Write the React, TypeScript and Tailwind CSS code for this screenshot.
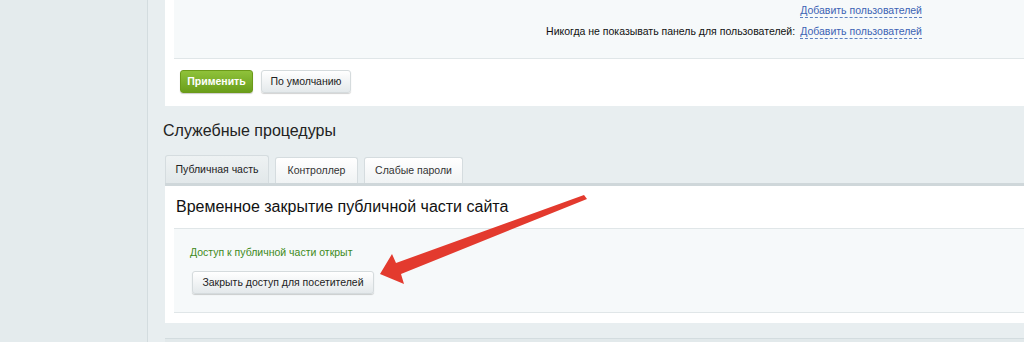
export default function App() {
  return (
    <div
      className="relative flex h-[342px] w-[1024px] overflow-hidden bg-[#e8eef0] text-[#222]"
      style={{ fontFamily: '"Liberation Sans", Arial, sans-serif' }}
    >
      {/* left column */}
      <div className="w-[148px] shrink-0 border-r border-[#d3dcdf] bg-[#e4ebed]" />

      <div className="flex flex-1 flex-col pl-[17px]">
        {/* settings panel, top cut off */}
        <div className="bg-white pl-[9px]">
          <div className="flex h-[59px] flex-col items-end justify-end border-b border-[#e0e6e8] bg-[#f6f9fa] pb-[16px] pr-[102px] text-[10.5px]">
            <div className="flex h-[22px] items-center">
              <a className="border-b border-dashed border-[#5b7fc0] leading-[13px] text-[#3c63b4]">Добавить пользователей</a>
            </div>
            <div className="flex h-[22px] items-center gap-[5px]">
              <span className="text-[#111]">Никогда не показывать панель для пользователей:</span>
              <a className="border-b border-dashed border-[#5b7fc0] leading-[13px] text-[#3c63b4]">Добавить пользователей</a>
            </div>
          </div>
          <div className="flex gap-[8px] pb-[13px] pl-[6px] pt-[11px]">
            <button className="h-[23px] w-[73px] rounded-[3px] border border-[#6c9a1a] bg-gradient-to-b from-[#8fc23a] to-[#6a9e1a] text-[10.5px] font-bold text-white shadow-[0_1px_1px_rgba(0,0,0,0.2)]">
              Применить
            </button>
            <button className="h-[23px] w-[90px] rounded-[3px] border border-[#d5dbdd] bg-gradient-to-b from-[#ffffff] to-[#e4e9eb] text-[10.5px] text-[#222] shadow-[0_1px_1px_rgba(0,0,0,0.18)]">
              По умолчанию
            </button>
          </div>
        </div>

        {/* section */}
        <h2 className="ml-[-2px] mt-[15px] h-[20px] text-[16px] leading-[20px] text-[#222]">Служебные процедуры</h2>
        <div className="mt-[14px] flex items-end gap-[6px] border-b-[3px] border-[#cfd7da]">
          <div className="flex h-[28px] w-[104px] items-center justify-center rounded-t-[3px] border border-b-0 border-[#d5dcdf] bg-gradient-to-b from-[#eef2f3] to-[#e2e8ea] text-[10.5px] text-[#222]">
            Публичная часть
          </div>
          <div className="flex h-[26px] w-[83px] items-center justify-center rounded-t-[3px] border border-b-0 border-[#d5dcdf] bg-gradient-to-b from-[#ffffff] to-[#f0f3f4] text-[10.5px] text-[#333]">
            Контроллер
          </div>
          <div className="flex h-[26px] w-[99px] items-center justify-center rounded-t-[3px] border border-b-0 border-[#d5dcdf] bg-gradient-to-b from-[#ffffff] to-[#f0f3f4] text-[10.5px] text-[#333]">
            Слабые пароли
          </div>
        </div>
        <div className="bg-white pb-[10px] pl-[9px]">
          <h3 className="flex h-[42px] items-center pl-[2px] text-[16px] text-[#111]">
            Временное закрытие публичной части сайта
          </h3>
          <div className="h-[85px] border-y border-[#e0e6e8] bg-[#f6f9fa] pl-[16px] pt-[16px]">
            <div className="text-[10.5px] leading-[14px] text-[#3e8a20]">Доступ к публичной части открыт</div>
            <button className="ml-[2px] mt-[12px] h-[23px] w-[182px] rounded-[3px] border border-[#d5dbdd] bg-gradient-to-b from-[#ffffff] to-[#e4e9eb] text-[10.5px] text-[#222] shadow-[0_1px_1px_rgba(0,0,0,0.18)]">
              Закрыть доступ для посетителей
            </button>
          </div>
        </div>
        <div className="mt-[15px] h-[10px] border-t border-[#d3dcdf] bg-[#e2e9eb]" />
      </div>

      {/* red annotation arrow */}
      <svg className="pointer-events-none absolute left-0 top-0" width="1024" height="342">
        <polygon
          points="584,195 587,199 401,274 404,284 380,274 392,254 396,263"
          fill="#e33a2e"
        />
      </svg>
    </div>
  );
}
